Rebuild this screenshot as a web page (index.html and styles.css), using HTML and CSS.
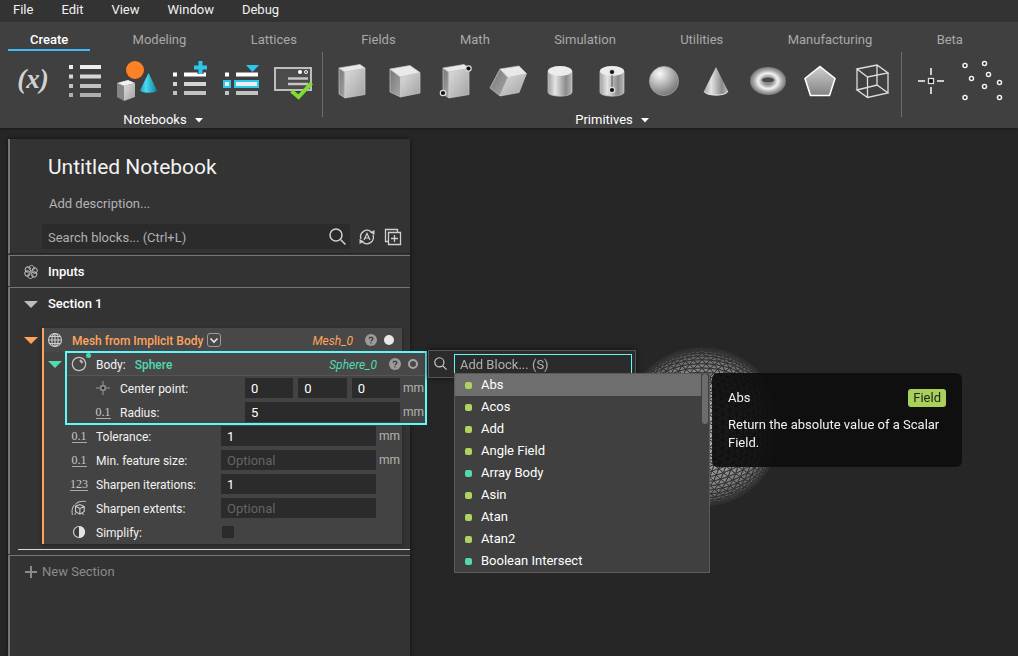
FILE: index.html
```html
<!DOCTYPE html>
<html lang="en">
<head>
<meta charset="utf-8">
<title>Untitled Notebook</title>
<link rel="stylesheet" href="styles.css">
</head>
<body>
<svg class="defs" aria-hidden="true">
  <defs>
    <linearGradient id="face" x1="0" y1="0" x2="1" y2="1"><stop offset="0" stop-color="#dcdcdc"/><stop offset="1" stop-color="#a2a2a2"/></linearGradient>
    <linearGradient id="side" x1="0" y1="0" x2="1" y2="1"><stop offset="0" stop-color="#757575"/><stop offset="1" stop-color="#a8a8a8"/></linearGradient>
    <linearGradient id="tube"><stop offset="0" stop-color="#a0a0a0"/><stop offset=".3" stop-color="#e4e4e4"/><stop offset=".75" stop-color="#8b8b8b"/><stop offset="1" stop-color="#b8b8b8"/></linearGradient>
    <linearGradient id="fade" x1="0" y1="0" x2="0" y2="1"><stop offset="0" stop-color="#cfcfcf"/><stop offset="1" stop-color="#828282"/></linearGradient>
    <linearGradient id="aqua"><stop offset="0" stop-color="#1c9cba"/><stop offset=".35" stop-color="#48dcf4"/><stop offset="1" stop-color="#127f9a"/></linearGradient>
    <radialGradient id="ball" cx=".35" cy=".25" r=".8"><stop offset="0" stop-color="#fafafa"/><stop offset=".5" stop-color="#b4b4b4"/><stop offset="1" stop-color="#707070"/></radialGradient>
    <radialGradient id="ring"><stop offset=".25" stop-color="#8a8a8a"/><stop offset=".55" stop-color="#f2f2f2"/><stop offset=".8" stop-color="#a5a5a5"/><stop offset="1" stop-color="#777"/></radialGradient>
    <g id="slab" stroke="#ccc" stroke-width=".7" stroke-linejoin="round">
      <path fill="url(#side)" d="M7 7 13 11V37L7 33Z"/><path fill="url(#face)" d="M13 11 33 7V33.5L13 37Z"/><path fill="#e9e9e9" d="M7 7 28 3.5 33 7 13 11Z"/>
    </g>
    <g id="can"><path fill="url(#tube)" stroke="#ccc" stroke-width=".7" d="M8 10V31C8 36.500 32 36.500 32 31V10Z"/><ellipse cx="20" cy="10" rx="12" ry="5" fill="#ececec"/></g>
    <g id="dot"><circle r="2.700" fill="#111" stroke="#ddd" stroke-width="1.200"/></g>
    <g id="node"><circle r="2" fill="#222" stroke="#f4f4f4" stroke-width="1.500"/></g>
    <g id="lens" fill="none" stroke="#d0d0d0" stroke-width="1.500"><circle cx="7" cy="7" r="6"/><path d="m11.500 11.500 5 5"/></g>
    <g id="help"><circle cx="6" cy="6" r="6" fill="#9b9b9b"/><path d="M4.200 4.700C4.200 2.500 7.800 2.500 7.800 4.700 7.800 5.900 6 6 6 7.300M6 8.300V9.600" fill="none" stroke="#3c3c3c" stroke-width="1.300"/></g>
    <path id="caret" d="M0 0H14L7 7Z"/>
  </defs>
</svg>

<header class="chrome">
  <nav class="menubar" aria-label="Application">
    <button>File</button><button>Edit</button><button>View</button><button>Window</button><button>Debug</button>
  </nav>
  <nav class="tabs" aria-label="Ribbon">
    <button class="tab active">Create</button><button class="tab">Modeling</button><button class="tab">Lattices</button><button class="tab">Fields</button><button class="tab">Math</button><button class="tab">Simulation</button><button class="tab">Utilities</button><button class="tab">Manufacturing</button><button class="tab">Beta</button>
  </nav>
  <div class="ribbon">
    <section class="group">
      <div class="tools">
        <button class="tool variable" aria-label="Variable">(x)</button>
        <button class="tool" aria-label="List"><svg viewBox="0 0 40 40"><path fill="#eee" d="M4 4h4v4H4zM15 4h21v4H15z"/><path fill="#d6d6d6" d="M4 13.500h4v4H4zM15 13.500h21v4H15z"/><path fill="#c2c2c2" d="M4 23h4v4H4zM15 23h21v4H15z"/><path fill="#aeaeae" d="M4 32h4v4H4zM15 32h21v4H15z"/></svg></button>
        <button class="tool" aria-label="Custom block"><svg viewBox="0 0 40 40"><circle cx="18" cy="9" r="9" fill="#ff8126"/><path d="M31.500 12 40 29.500C38 32.500 25 32.500 23 29.500Z" fill="url(#aqua)"/><path fill="#858585" d="M0 22 7 25V40L0 36Z"/><path fill="url(#face)" d="M7 25 18 22V36L7 40Z"/><path fill="#f0f0f0" d="M0 22 11 19 18 22 7 25Z"/></svg></button>
        <button class="tool" aria-label="Add section"><svg viewBox="0 0 40 40"><path fill="#fff" d="M4 11.500h4v4H4zM15 11.500h22v4H15z"/><path fill="#d4d4d4" d="M4 21h4v4H4zM15 21h22v4H15z"/><path fill="#c2c2c2" d="M4 30h4v4H4zM15 30h22v4H15z"/><path d="M31.500 0v13M25 6.500h13" stroke="#404040" stroke-width="6"/><path d="M31.500 0v13M25 6.500h13" stroke="#2cc8ec" stroke-width="4"/></svg></button>
        <button class="tool" aria-label="Insert block"><svg viewBox="0 0 40 40"><path fill="#fff" d="M4 11.500h4v4H4zM15 11.500h22v4H15z"/><path fill="#2cc8ec" d="M2 19h8v8H2zM13 19h25v8H13zM25 4h13l-6.500 7z"/><path fill="#eee" d="M4 21h4v4H4zM15 21h21v4H15z"/><path fill="#c2c2c2" d="M4 30h4v4H4zM15 30h22v4H15z"/></svg></button>
        <button class="tool" aria-label="Validate"><svg viewBox="0 0 40 40"><rect x="2" y="7" width="36" height="22" fill="#4b4b4b" stroke="#bdbdbd" stroke-width="2"/><circle cx="27" cy="11" r="2" fill="#fff"/><circle cx="33" cy="11" r="1.500" fill="none" stroke="#fff"/><path d="M15 17.500h20M15 23h20" stroke="#c4c4c4" stroke-width="2.500"/><path d="m18.500 30 7 6L38.500 22" fill="none" stroke="#7fdc30" stroke-width="4"/></svg></button>
      </div>
      <button class="group-name">Notebooks <svg class="drop" viewBox="0 0 8 5"><path d="M0 0h8L4 4.500z"/></svg></button>
    </section>
    <section class="group">
      <div class="tools">
        <button class="tool" aria-label="Box"><svg viewBox="0 0 40 40"><use href="#slab"/></svg></button>
        <button class="tool" aria-label="Cube"><svg viewBox="0 0 40 40"><g stroke="#ccc" stroke-width=".7" stroke-linejoin="round"><path fill="url(#side)" d="M6 8 16.500 16V36L6 31Z"/><path fill="url(#face)" d="M16.500 16 36 11.500V32L16.500 36Z"/><path fill="#e9e9e9" d="M6 8 26 4.500 36 11.500 16.500 16Z"/></g></svg></button>
        <button class="tool" aria-label="Box from corners"><svg viewBox="0 0 40 40"><use href="#slab"/><use href="#dot" x="32.500" y="7.500"/><use href="#dot" x="7" y="32"/></svg></button>
        <button class="tool" aria-label="Parallelepiped"><svg viewBox="0 0 40 40"><g stroke="#ccc" stroke-width=".7" stroke-linejoin="round"><path fill="url(#side)" d="M12 8 20 16.500 12 35 2 27Z"/><path fill="url(#face)" d="M20 16.500 38.500 12.500 31 31.500 12 35Z"/><path fill="#e9e9e9" d="M12 8 31 5 38.500 12.500 20 16.500Z"/></g></svg></button>
        <button class="tool" aria-label="Cylinder"><svg viewBox="0 0 40 40"><use href="#can"/></svg></button>
        <button class="tool" aria-label="Cylinder from points"><svg viewBox="0 0 40 40"><use href="#can"/><path d="M20 11v18" stroke="#555"/><use href="#dot" x="20" y="11"/><use href="#dot" x="20" y="29"/></svg></button>
        <button class="tool" aria-label="Sphere"><svg viewBox="0 0 40 40"><circle cx="20" cy="20" r="14.500" fill="url(#ball)" stroke="#aaa" stroke-width=".8"/></svg></button>
        <button class="tool" aria-label="Cone"><svg viewBox="0 0 40 40"><path d="M20 6 32 30C31 35.500 9 35.500 8 30Z" fill="url(#tube)"/><path d="M8 30C9 35.500 31 35.500 32 30" fill="none" stroke="#eee"/></svg></button>
        <button class="tool" aria-label="Torus"><svg viewBox="0 0 40 40"><ellipse cx="20" cy="20" rx="18" ry="14" fill="url(#ring)"/><ellipse cx="20" cy="19" rx="6.500" ry="3" fill="#484848" stroke="#a5a5a5"/></svg></button>
        <button class="tool" aria-label="Polygon"><svg viewBox="0 0 40 40"><path d="M20 5.500 35 17.500 29.500 34.500H10.500L5 17.500Z" fill="url(#fade)" stroke="#fff" stroke-width="1.600"/></svg></button>
        <button class="tool" aria-label="Bounding box"><svg viewBox="0 0 40 40"><path d="M5 8 25 4 36 12 15.500 16ZM5 29 25 24 36 32 15.500 36.500ZM5 8V29M25 4V24M36 12V32M15.500 16V36.500" fill="none" stroke="#ddd" stroke-width="1.300"/></svg></button>
      </div>
      <button class="group-name">Primitives <svg class="drop" viewBox="0 0 8 5"><path d="M0 0h8L4 4.500z"/></svg></button>
    </section>
    <section class="group">
      <div class="tools">
        <button class="tool" aria-label="Point"><svg viewBox="0 0 40 40"><path d="M7 20h7M26 20h7M20 7v7M20 26v7" stroke="#ccc" stroke-width="2"/><rect x="17.500" y="17.500" width="5" height="5" fill="#111" stroke="#ddd" stroke-width="1.300"/></svg></button>
        <button class="tool" aria-label="Point list"><svg viewBox="0 0 40 40"><use href="#node" x="2" y="4.500"/><use href="#node" x="21.500" y="2.500"/><use href="#node" x="25.500" y="13.500"/><use href="#node" x="8.500" y="17.500"/><use href="#node" x="21.500" y="25.500"/><use href="#node" x="36.500" y="21.500"/><use href="#node" x="2" y="36.500"/><use href="#node" x="36.500" y="36.500"/></svg></button>
      </div>
    </section>
  </div>
</header>

<main class="workspace">
  <canvas class="mesh" id="mesh" width="160" height="160"></canvas>

  <section class="notebook">
    <div class="intro">
      <h1>Untitled Notebook</h1>
      <p>Add description...</p>
      <div class="search-row">
        <div class="search"><input type="search" aria-label="Search blocks" placeholder="Search blocks... (Ctrl+L)"><svg viewBox="0 0 17 17"><use href="#lens"/></svg></div>
        <button aria-label="Auto refresh"><svg viewBox="0 0 16 16"><path d="M2 10A6.500 6.500 0 0 1 12.500 3M14 6A6.500 6.500 0 0 1 3.500 13" fill="none" stroke="#d0d0d0" stroke-width="1.300"/><path d="M15.500 1v5L11 3.500ZM.5 15v-5L5 12.500Z" fill="#d0d0d0"/><path d="M5 11 8 4.500 11 11M6 9h4" fill="none" stroke="#d0d0d0" stroke-width="1.200"/></svg></button>
        <button aria-label="Expand all"><svg viewBox="0 0 16 16"><path d="M4 12.500H.5V.5h12V4" fill="none" stroke="#d0d0d0" stroke-width="1.300"/><path d="M3.500 3.500h12v12h-12zM9.500 6v7M6 9.500h7" fill="none" stroke="#d0d0d0" stroke-width="1.300"/></svg></button>
      </div>
    </div>

    <div class="section">
      <h2><svg class="glyph" viewBox="0 0 14 14"><g fill="none" stroke="#bdbdbd"><circle cx="7" cy="7" r="1.200"/><path id="petal" d="M7 5.500C4 4.500 4.500.5 7.500.5 10.500.5 11 4 9 5.500"/><use href="#petal" transform="rotate(60 7 7)"/><use href="#petal" transform="rotate(120 7 7)"/><use href="#petal" transform="rotate(180 7 7)"/><use href="#petal" transform="rotate(240 7 7)"/><use href="#petal" transform="rotate(300 7 7)"/></g></svg>Inputs</h2>
    </div>

    <div class="section">
      <h2><svg class="caret" viewBox="0 0 14 7"><use href="#caret"/></svg>Section 1</h2>
      <div class="tree">
        <button class="fold orange" aria-label="Collapse mesh"><svg class="caret" viewBox="0 0 14 7"><use href="#caret"/></svg></button>
        <div class="block">
          <div class="block-head">
            <svg class="type" viewBox="0 0 16 16"><g fill="none" stroke="#ccc" stroke-width="1.100"><circle cx="8" cy="8" r="6.500"/><ellipse cx="8" cy="8" rx="3.200" ry="6.500"/><path d="M8 1.500v13M1.500 8h13M2.500 4.500h11M2.500 11.500h11"/></g></svg>
            <span class="block-title orange">Mesh from Implicit Body</span>
            <button class="overload" aria-label="Overloads"><svg viewBox="0 0 8 5"><path d="m.5.500 3.500 3.500L7.500.500" fill="none" stroke="#e4e4e4" stroke-width="1.700"/></svg></button>
            <em class="orange">Mesh_0</em>
            <button class="help" aria-label="Help"><svg viewBox="0 0 12 12"><use href="#help"/></svg></button>
            <span class="state full"></span>
          </div>

          <div class="child">
            <button class="fold green" aria-label="Collapse body"><svg class="caret" viewBox="0 0 14 7"><use href="#caret"/></svg></button>
            <div class="nested">
              <div class="block-head">
                <svg class="type" viewBox="0 0 16 16"><circle cx="8" cy="8" r="6.700" fill="none" stroke="#c8c8c8" stroke-width="1.200"/><path d="M9 4 11.500 7" stroke="#bbb" stroke-width="2"/><circle cx="17.500" cy="-.5" r="2.500" fill="#42d9a7"/></svg>
                <span class="slot">Body:</span><span class="block-title green">Sphere</span>
                <em class="green">Sphere_0</em>
                <button class="help" aria-label="Help"><svg viewBox="0 0 12 12"><use href="#help"/></svg></button>
                <span class="state"></span>
              </div>
              <div class="row">
                <svg class="type" viewBox="0 0 14 14"><path d="M0 7h4.500M9.500 7H14M7 0v4.500M7 9.500V14" stroke="#999"/><rect x="5" y="5" width="4" height="4" fill="#222" stroke="#bbb"/></svg>
                <label for="cx">Center point:</label>
                <div class="field triple"><input id="cx" value="0"><input aria-label="Center y" value="0"><input aria-label="Center z" value="0"></div>
                <span class="unit">mm</span>
              </div>
              <div class="row">
                <span class="num">0.1</span><label for="radius">Radius:</label>
                <div class="field"><input id="radius" value="5"></div><span class="unit">mm</span>
              </div>
            </div>
          </div>

          <div class="row"><span class="num">0.1</span><label for="tol">Tolerance:</label><div class="field"><input id="tol" value="1"></div><span class="unit">mm</span></div>
          <div class="row"><span class="num">0.1</span><label for="feat">Min. feature size:</label><div class="field"><input id="feat" placeholder="Optional"></div><span class="unit">mm</span></div>
          <div class="row"><span class="num">123</span><label for="iter">Sharpen iterations:</label><div class="field"><input id="iter" value="1"></div></div>
          <div class="row"><svg class="type" viewBox="0 0 16 16"><path d="M4 6 9 4 14 6.500V12L9 15 4 12ZM4 6 9 8.500 14 6.500M9 8.500V15" fill="none" stroke="#ccc" stroke-width="1.200"/><path d="M16 .5C10 0 6 1 4 4M.5 16C-.5 11 0 7 3 4.500M3 15.500 5 13M13 16l-1-3" fill="none" stroke="#bbb" stroke-width="1.200"/></svg><label for="ext">Sharpen extents:</label><div class="field"><input id="ext" placeholder="Optional"></div></div>
          <div class="row"><svg class="type" viewBox="0 0 14 14"><circle cx="7" cy="7" r="5.500" fill="#3a3a3a" stroke="#d0d0d0" stroke-width="1.200"/><path d="M7 1a6 6 0 0 1 0 12Z" fill="#e4e4e4"/></svg><label for="simp">Simplify:</label><div class="field"><input id="simp" type="checkbox"></div></div>
        </div>
      </div>
      <hr>
    </div>

    <div class="section last">
      <button class="new-section"><svg viewBox="0 0 12 12"><path d="M6 0v12M0 6h12" stroke="#8a8a8a" stroke-width="2"/></svg>New Section</button>
    </div>
  </section>

  <div class="picker">
    <svg viewBox="0 0 17 17"><use href="#lens"/></svg>
    <input aria-label="Add block" placeholder="Add Block... (S)">
    <div class="results">
      <ul>
        <li class="current"><button>Abs</button></li>
        <li><button>Acos</button></li>
        <li><button>Add</button></li>
        <li><button>Angle Field</button></li>
        <li class="body"><button>Array Body</button></li>
        <li><button>Asin</button></li>
        <li><button>Atan</button></li>
        <li><button>Atan2</button></li>
        <li class="body"><button>Boolean Intersect</button></li>
      </ul>
      <div class="scroll"><span></span></div>
    </div>
  </div>

  <aside class="tip" role="tooltip">
    <div class="tip-head"><span>Abs</span><span class="badge">Field</span></div>
    <p>Return the absolute value of a Scalar Field.</p>
  </aside>
</main>
<script src="mesh.js"></script>
</body>
</html>
```
FILE: styles.css
```css
* { box-sizing: border-box; }
body {
  margin: 0;
  height: 100vh;
  display: flex;
  flex-direction: column;
  overflow: hidden;
  background: #262626;
  color: #f2f2f2;
  font: 13px/18px Roboto, sans-serif;
}
button, input { font: inherit; color: inherit; margin: 0; padding: 0; border: 0; background: none; border-radius: 0; }
input { min-width: 0; outline: 0; appearance: none; }
h1, h2, p, ul { margin: 0; padding: 0; font-weight: 400; list-style: none; }
svg { display: block; overflow: visible; flex: none; }
.defs { position: absolute; width: 0; height: 0; }
.orange { color: #ffa35c; fill: #ffa35c; }
.green { color: #4fdab0; fill: #4fdab0; }

/* menus and ribbon */
.chrome { background: #404040; box-shadow: 0 0 3px #111; position: relative; }
.menubar { display: flex; gap: 28px; height: 22px; padding: 0 13px; background: #333; }
.menubar button { height: 20px; }
.tabs { display: flex; justify-content: space-between; height: 30px; padding: 5px 33px 0 8px; }
.tab { height: 24px; padding: 3px 22px 0; color: #a9a9a9; border-bottom: 2px solid transparent; }
.tab.active { color: #fff; border-color: #45b8fb; font-weight: 500; }
.ribbon { display: flex; height: 76px; padding-left: 4px; }
.group { padding: 5px 3px 0; height: 65px; }
.group + .group { border-left: 1px solid #6e6e6e; }
.tools { display: flex; }
.tool { width: 52px; height: 48px; display: grid; place-items: center; }
.tool svg { width: 40px; height: 40px; }
.variable { padding-bottom: 4px; font: italic bold 27px/40px "Liberation Serif", serif; color: #d2d2d2; }
.group-name { display: flex; align-items: center; justify-content: center; gap: 8px; width: 100%; height: 30px; color: #fff; }
.drop { width: 8px; height: 5px; fill: #fff; }

/* notebook */
.workspace { flex: 1; min-height: 0; position: relative; display: flex; padding: 11px 8px 0; }
.notebook { width: 402px; display: flex; flex-direction: column; background: #333; box-shadow: 0 0 4px #111; position: relative; }
.intro, .section { border-left: 2px solid #757575; }
.intro { height: 115px; padding: 14px 9px 0 32px; border-bottom: 1px solid #252525; }
.intro h1 { padding-left: 6px; font-size: 21px; line-height: 28px; }
.intro p { padding: 14px 0 11px 7px; color: #b4b4b4; }
.search-row { display: flex; align-items: center; gap: 10px; }
.search { flex: 1; display: flex; align-items: center; height: 25px; padding: 0 4px 0 6px; background: #2b2b2b; }
.search input { flex: 1; padding-top: 2px; }
.search svg { width: 17px; height: 17px; }
.search-row button svg { width: 16px; height: 16px; }
.search + button { margin-left: -1px; }
::placeholder { color: #b0b0b0; opacity: 1; }
.section { border-top: 1px solid #757575; margin-top: 1px; }
.section h2 { display: flex; align-items: center; gap: 10px; height: 30px; padding: 2px 0 0 14px; font-size: 13px; font-weight: 500; color: #fff; }
.glyph { width: 14px; height: 14px; }
.caret { width: 14px; height: 7px; }
h2 .caret { fill: #bdbdbd; }
.section hr { margin: 5px 0 4px 8px; border: 0; border-top: 1px solid #d8d8d8; }
.last { flex: 1; }
.new-section { display: flex; align-items: center; gap: 5px; height: 32px; padding-left: 15px; color: #8a8a8a; }
.new-section svg { width: 12px; height: 12px; }
.tree { display: flex; padding: 10px 8px 0 0; }
.fold { display: flex; justify-content: center; align-items: center; height: 24px; width: 22px; }
.tree > .fold { margin-left: 10px; }
.block { flex: 1; border-left: 2px solid #ffa35c; background: #434343; box-shadow: 0 1px 3px #222; font-size: 12px; }
.block-head { display: flex; align-items: center; height: 24px; padding: 0 8px 0 3px; background: #484848; }
.block-head span, .block-head em { padding-top: 2px; }
.type { width: 16px; height: 16px; }
.block-title { margin-left: 9px; font-weight: 500; }
.block-head em { margin-left: auto; padding-right: 12px; }
.overload { display: grid; place-items: center; width: 14px; height: 14px; margin-left: 4px; border: 1px solid #9a9a9a; border-radius: 3px; }
.overload svg { width: 8px; height: 5px; }
.help svg { width: 12px; height: 12px; }
.state { width: 10px; height: 10px; margin-left: 7px; border: 2px solid #a6a6a6; border-radius: 50%; }
.full { background: #e8e8e8; border-color: #e8e8e8; }
.child { display: flex; margin-right: -24px; }
.nested { flex: 1; background: #434343; outline: 2px solid #5ff7f9; outline-offset: -1px; position: relative; }
.nested .block-head { padding-left: 5px; border-bottom: 1px solid #555; }
.slot { margin-left: 9px; }
.row { display: grid; grid-template-columns: 24px 1fr 155px 26px; align-items: center; height: 24px; padding-left: 23px; }
.nested .row { padding-left: 25px; }
.row label { padding: 2px 0 0 5px; }
.row .type { justify-self: center; width: 14px; height: 14px; }
.num { justify-self: center; font: 12px/12px "Liberation Serif", serif; color: #c8c8c8; border-bottom: 1px solid #aaa; }
.field { display: flex; font-size: 13px; }
.field input { flex: 1; height: 20px; padding: 1px 6px 0; background: #2b2b2b; color: #fff; }
.field input::placeholder { color: #646464; }
.field input[type="checkbox"] { flex: none; width: 12px; height: 12px; padding: 0; margin-left: 1px; }
.triple { gap: 5px; }
.unit { padding-left: 3px; color: #b4b4b4; }

/* viewport overlays */
.mesh { position: absolute; left: 622px; top: 219px; }
.picker { position: absolute; left: 428px; top: 222px; width: 208px; height: 28px; display: flex; padding: 3px; gap: 7px; border: 1px solid #555; background: #2b2b2b; box-shadow: 0 0 5px #111; }
.picker > svg { width: 13px; height: 13px; margin: 3px 0 0 2px; }
.picker > input { flex: 1; height: 21px; padding: 0 5px; border: 1px solid #5ff7f9; }
.results { position: absolute; left: 25px; top: 22px; width: 256px; display: flex; background: #404040; border: 1px solid #5a5a5a; }
.results ul { flex: 1; }
.results button { display: flex; align-items: center; gap: 9px; width: 100%; height: 22px; padding-left: 10px; color: #fff; text-align: left; }
.results button::before { content: ""; width: 7px; height: 7px; border-radius: 2px; background: #aed361; }
.results .body button::before { background: #4fdab0; }
.current { background: #6e6e6e; }
.scroll { width: 8px; padding: 0 1px; }
.scroll span { display: block; height: 50px; border-radius: 3px; background: #6c6c6c; }
.tip { position: absolute; left: 712px; top: 245px; width: 250px; padding: 16px 16px 15px; border-radius: 6px; background: rgba(13, 13, 13, .92); }
.tip-head { display: flex; justify-content: space-between; margin-bottom: 9px; }
.badge { padding: 0 5px; border-radius: 3px; background: #a9d159; color: #222; }
```
FILE: mesh.js
```js
// Draws a triangulated sphere, brightest where it faces the viewer.
const ctx = document.getElementById("mesh").getContext("2d");
const unit = v => { const l = Math.hypot(...v); return v.map(c => c / l); };
const g = (1 + Math.sqrt(5)) / 2;
const v = [[-1,g,0],[1,g,0],[-1,-g,0],[1,-g,0],[0,-1,g],[0,1,g],[0,-1,-g],[0,1,-g],[g,0,-1],[g,0,1],[-g,0,-1],[-g,0,1]].map(unit);
const base = [[0,11,5],[0,5,1],[0,1,7],[0,7,10],[0,10,11],[1,5,9],[5,11,4],[11,10,2],[10,7,6],[7,1,8],[3,9,4],[3,4,2],[3,2,6],[3,6,8],[3,8,9],[4,9,5],[2,4,11],[6,2,10],[8,6,7],[9,8,1]];
const N = 12;

const draw = f => {
  const z = (f[0][2] + f[1][2] + f[2][2]) / 3;
  if (z < 0) return;
  const s = Math.round(45 + 125 * z);
  ctx.beginPath();
  f.forEach(p => ctx.lineTo(80 + 79 * p[0], 80 - 79 * p[1]));
  ctx.closePath();
  ctx.fillStyle = `rgb(${s},${s},${s})`;
  ctx.fill();
  ctx.strokeStyle = "#303030";
  ctx.lineWidth = 0.9;
  ctx.stroke();
};

for (const [a, b, c] of base) {
  const at = (i, j) => unit([0, 1, 2].map(k => v[a][k] * (N - i - j) + v[b][k] * i + v[c][k] * j));
  for (let i = 0; i < N; i++) {
    for (let j = 0; i + j < N; j++) {
      draw([at(i, j), at(i + 1, j), at(i, j + 1)]);
      if (i + j < N - 1) draw([at(i + 1, j), at(i + 1, j + 1), at(i, j + 1)]);
    }
  }
}
```
